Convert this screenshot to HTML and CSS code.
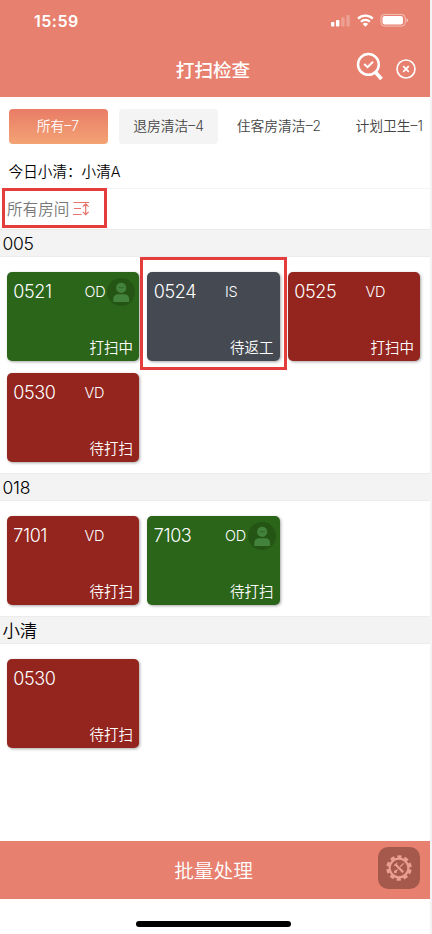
FILE: index.html
```html
<!DOCTYPE html>
<html lang="zh-CN">
<head>
<meta charset="utf-8">
<meta name="viewport" content="width=device-width, initial-scale=1">
<title>打扫检查</title>
<link rel="stylesheet" href="styles.css">
</head>
<body>
<svg width="0" height="0" class="defs" aria-hidden="true">
  <symbol id="guest" viewBox="0 0 28 28">
    <circle cx="14" cy="14" r="14" fill="#255514"/>
    <circle cx="14.2" cy="9.8" r="5.1" fill="#43823a"/>
    <path d="M11.8 9.4q2.4 1 4.8 0" fill="none" stroke="#2f6825" stroke-width="1"/>
    <path d="M6.3 24v-3.2a4.6 4.6 0 0 1 4.6-4.6h6.6a4.6 4.6 0 0 1 4.6 4.6V24z" fill="#43823a"/>
  </symbol>
</svg>
<div class="phone">
  <header class="top">
    <div class="status">
      <span class="time">15:59</span>
      <svg class="signals" width="78" height="16" viewBox="0 0 78 16" fill="#fff">
        <rect x="0" y="9" width="3.4" height="4.5" rx=".8"/>
        <rect x="5" y="7" width="3.4" height="6.5" rx=".8"/>
        <rect x="10.2" y="4.5" width="3.4" height="9" rx=".8" opacity=".25"/>
        <rect x="15.4" y="2" width="3.4" height="11.5" rx=".8" opacity=".25"/>
        <g fill="none" stroke="#fff" stroke-width="2.2">
          <path d="M27 5.6a10.6 10.6 0 0 1 14.8 0"/>
          <path d="M29.9 8.7a6.5 6.5 0 0 1 9 0"/>
        </g>
        <path d="M34.4 13.8l-2.7-2.9a4 4 0 0 1 5.4 0z"/>
        <rect x="49.9" y="1.4" width="24.4" height="11.7" rx="3.6" fill="none" stroke="#fff" stroke-opacity=".5"/>
        <rect x="51.5" y="3" width="20.5" height="8.5" rx="2.2"/>
        <path d="M75.6 5.2q1.4.6 1.4 2t-1.4 2z" opacity=".6"/>
      </svg>
    </div>
    <div class="nav">
      <h1>打扫检查</h1>
      <svg class="search" width="28" height="30" viewBox="0 0 28 30" fill="none" stroke="#fff">
        <circle cx="12.4" cy="12.4" r="10.4" stroke-width="2.5"/>
        <path d="M19.5 20.3l6 6.7" stroke-width="3.6"/>
        <path d="M8.2 12l3.4 3.2 5.4-5.4" stroke-width="2"/>
      </svg>
      <svg class="close" width="20" height="20" viewBox="0 0 20 20" fill="none" stroke="#fff">
        <circle cx="10" cy="10" r="9" stroke-width="1.6"/>
        <path d="M7.2 7.2l5.6 5.6M12.8 7.2l-5.6 5.6" stroke-width="1.7"/>
      </svg>
    </div>
  </header>

  <nav class="tabs">
    <span class="tab active">所有–7</span>
    <span class="tab shaded">退房清洁–4</span>
    <span class="tab">住客房清洁–2</span>
    <span class="tab last">计划卫生–1</span>
  </nav>
  <div class="today">今日小清：小清A</div>
  <div class="filter">
    <div class="filter-box">
      <span>所有房间</span>
      <svg width="17" height="15" viewBox="0 0 17 15" fill="none" stroke="#e8736a" stroke-width="1.2">
        <path d="M.5 1.5H16M1 7.5h7M0 13.5h8.5M12.7 3v10.5M9.8 5.7l2.9-2.9 2.9 2.9M9.8 10.8l2.9 2.9 2.9-2.9"/>
      </svg>
    </div>
  </div>

  <main>
    <section>
      <h2>005</h2>
      <div class="cards">
        <article class="card green"><div class="line"><b>0521</b><i>OD</i><svg class="guest"><use href="#guest"/></svg></div><p>打扫中</p></article>
        <article class="card slate marked"><div class="line"><b>0524</b><i>IS</i></div><p>待返工</p></article>
        <article class="card red"><div class="line"><b>0525</b><i>VD</i></div><p>打扫中</p></article>
        <article class="card red"><div class="line"><b>0530</b><i>VD</i></div><p>待打扫</p></article>
      </div>
    </section>
    <section>
      <h2>018</h2>
      <div class="cards">
        <article class="card red"><div class="line"><b>7101</b><i>VD</i></div><p>待打扫</p></article>
        <article class="card green"><div class="line"><b>7103</b><i>OD</i><svg class="guest"><use href="#guest"/></svg></div><p>待打扫</p></article>
      </div>
    </section>
    <section>
      <h2>小清</h2>
      <div class="cards">
        <article class="card red"><div class="line"><b>0530</b></div><p>待打扫</p></article>
      </div>
    </section>
  </main>

  <footer>
    <div class="batch">
      <span>批量处理</span>
      <div class="tool">
        <svg width="28" height="28" viewBox="-14 -14 28 28" fill="none" stroke="#e9a091">
          <circle r="9.4" stroke-width="2.2"/>
          <circle r="11.4" stroke-width="2.6" stroke-dasharray="4.2 2.963" stroke-dashoffset="-1.6"/>
          <path d="M-3.2-3.2L3.6 3.6" stroke-width="2.2" stroke-linecap="round"/>
          <path d="M4.6-4.6L1.2-1.2M-1.4 1.4l-2.3 2.3" stroke-width="1.3"/>
          <circle cx="-3.6" cy="3.8" r="1.5" fill="#e9a091" stroke="none"/>
          <path d="M-4.9-2.7a2.6 2.6 0 0 0 2.6-2.6" stroke-width="1.2"/>
        </svg>
      </div>
    </div>
    <div class="home"></div>
  </footer>
</div>
</body>
</html>
```

FILE: styles.css
```css
* { box-sizing: border-box; margin: 0; padding: 0; }
body {
  background: #f3f3f5;
  font-family: Inter, "Noto Sans CJK SC", sans-serif;
  font-weight: 350;
  color: #000;
}
.defs { position: absolute; }
.phone {
  width: 430px;
  height: 934px;
  background: #fff;
  display: flex;
  flex-direction: column;
  overflow: hidden;
}
svg { display: block; flex: none; }

.top { height: 97px; background: #e8806f; color: #fff; flex: none; }
.status {
  height: 42px;
  padding: 0 21px 0 34px;
  display: flex;
  justify-content: space-between;
  align-items: center;
}
.time { font-size: 16px; font-weight: 600; letter-spacing: .4px; }
.signals { margin-top: -1px; }
.time { letter-spacing: .5px; }
.nav {
  height: 55px;
  display: grid;
  grid-template-columns: 1fr auto 1fr;
  grid-template-rows: 55px;
  padding: 0 14px 0 0;
}
.nav h1 {
  grid-column: 1 / 4;
  grid-row: 1;
  text-align: center;
  padding-left: 10px;
  font-size: 18.6px;
  line-height: 57px;
  font-weight: 500;
}
.search { grid-column: 3; grid-row: 1; justify-self: end; margin: 10px 32px 0 0; }
.close { grid-column: 3; grid-row: 1; justify-self: end; margin-top: 17px; }

.tabs {
  height: 58px;
  padding: 12px 0 0 9px;
  display: flex;
  gap: 11.8px;
  flex: none;
}
.tab {
  width: 98.5px;
  height: 35px;
  border-radius: 4px;
  font-size: 13.8px;
  line-height: 35px;
  text-align: center;
  color: #444;
  white-space: nowrap;
  flex: none;
}
.tab.active { color: #fff; text-indent: -1px; background: linear-gradient(#e97c66, #f3a374); }
.tab.shaded { background: #f4f4f4; }

.today {
  height: 34px;
  padding-left: 8.6px;
  font-size: 14.6px;
  line-height: 34px;
  border-bottom: 1px solid #f4f4f4;
  flex: none;
}
.filter { height: 40px; padding: 0 0 0 2px; flex: none; }
.filter-box {
  width: 105px;
  height: 40px;
  margin-top: -1px;
  border: 3px solid #e33d3d;
  padding-left: 2px;
  display: flex;
  align-items: center;
  gap: 4px;
  font-size: 15.6px;
  color: #777;
}

main { flex: 1; }
h2 {
  height: 28px;
  padding-left: 2.6px;
  background: #f3f3f3;
  border-top: 1px solid #ececec;
  border-bottom: 1px solid #ececec;
  font-size: 17.5px;
  line-height: 27px;
  font-weight: 350;
  letter-spacing: -.3px;
}
.cards {
  display: grid;
  grid-template-columns: repeat(3, 132.5px);
  gap: 12px 8px;
  padding: 15px 6.6px 11px;
}
.card {
  height: 89px;
  padding: 5px 6px 4px 6.7px;
  border-radius: 5px;
  box-shadow: 1px 1px 3px rgba(0, 0, 0, .35);
  color: #fff;
  display: flex;
  flex-direction: column;
  justify-content: space-between;
  position: relative;
}
.green { background: #2b651a; }
.red { background: #93251e; }
.slate { background: #454a52; }
.marked::after {
  content: "";
  position: absolute;
  inset: -15px -7px -9px;
  border: 3px solid #e33d3d;
}
.line { display: flex; align-items: center; height: 29px; }
.line b { width: 71.2px; font-size: 18px; font-weight: 350; letter-spacing: -.4px; flex: none; }
.line i { width: 23px; font-size: 14.5px; font-style: normal; letter-spacing: -.3px; flex: none; }
.guest { width: 28px; height: 28px; }
.card p { text-align: right; font-size: 14.5px; line-height: 18px; }

footer { height: 93px; flex: none; }
.batch {
  height: 58px;
  background: #e8806f;
  color: #fff;
  font-size: 19.7px;
  line-height: 60px;
  text-align: center;
  position: relative;
}
.batch span { padding-right: 3px; }
.tool {
  position: absolute;
  right: 10px;
  top: 6px;
  width: 42px;
  height: 42px;
  border-radius: 10px;
  background: #a5594c;
  display: grid;
  place-items: center;
}
.home { width: 155px; height: 6px; margin: 22px 0 0 136px; border-radius: 3px; background: #000; }
```
